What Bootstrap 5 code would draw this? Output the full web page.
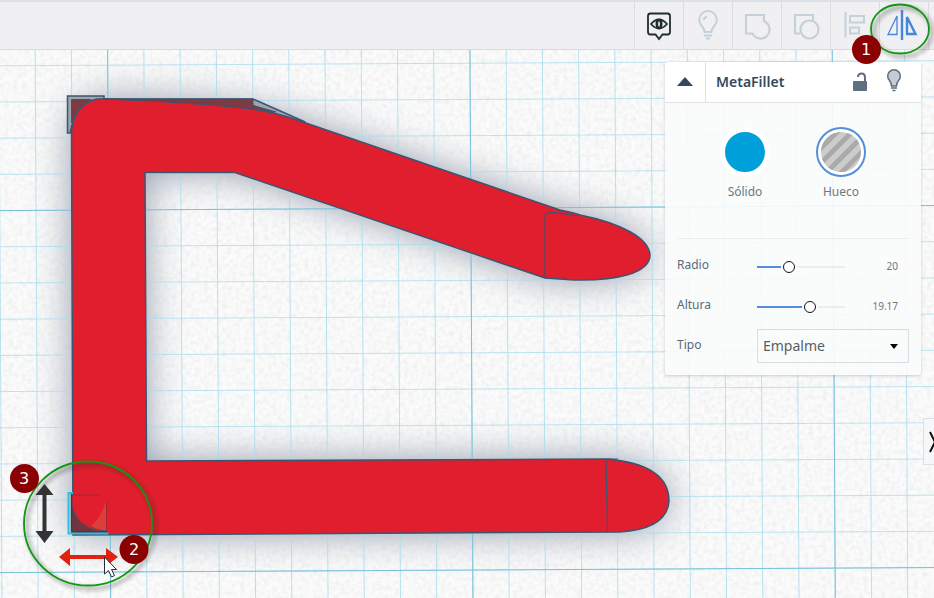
<!DOCTYPE html>
<html lang="es">
<head>
<meta charset="utf-8">
<meta name="viewport" content="width=device-width, initial-scale=1">
<title>MetaFillet</title>
<link href="https://cdn.jsdelivr.net/npm/bootstrap@5.3.0/dist/css/bootstrap.min.css" rel="stylesheet">
<style>
body { font-family: "Noto Sans", "Open Sans", sans-serif; color: #556575; }
.toolbar { height: 50px; background: #f0f0f2; border-top: 2px solid #dbe1e6; border-bottom: 1px solid #d9dade; padding-right: 5px; z-index: 2; }
.tool { width: 49px; border: 0; border-left: 1px solid #dcdde1; background: transparent; color: #c6d0d9; padding: 0; }
.tool:last-child { border-right: 1px solid #dcdde1; width: 50px; }
.tool svg { display: block; }
.scene { min-height: 0; background: #f9fafa; }
.scene-art, .notes { position: absolute; inset: 0; width: 100%; height: 100%; }
.notes { pointer-events: none; z-index: 5; }
.inspector { position: absolute; top: 12px; right: 13px; width: 256px; background: rgba(250, 251, 251, .92); border-radius: 3px; box-shadow: 0 1px 3px rgba(60, 70, 90, .25); }
.inspector-head { height: 41px; background: #fff; border-bottom: 1px solid #dfe1e4; border-radius: 3px 3px 0 0; padding: 0 19px 2px 0; }
.fold { width: 41px; border: 0; border-right: 1px solid #dfe1e4; background: transparent; padding: 0 0 4px; margin-bottom: -2px; }
.plain { border: 0; background: transparent; padding: 0; line-height: 1; }
.title { font-size: 14px; font-weight: 600; color: #34495e; padding-left: 10px; }
.kinds { height: 136px; margin: 0 12px; padding: 24px 43px 0; border-bottom: 1px solid #eaecee; }
.kind { width: 50px; font-size: 12px; line-height: 18px; color: #6b7785; }
.swatch { width: 50px; height: 50px; border-radius: 50%; border: 5px solid #fff; background: #00a0da; margin-bottom: 6px; }
.swatch-hole { border: 2px solid #5290dc; padding: 3px; background: #fff; }
.swatch-hole svg { display: block; }
.params { padding: 6px 12px 10px; font-size: 12px; }
.param { height: 40px; }
.param > label { width: 80px; color: #5a6a7b; }
.track { width: 88px; height: 16px; appearance: none; background: transparent; margin: 4px 0 0; }
.track::-webkit-slider-runnable-track { height: 2px; background: linear-gradient(to right, #5290dc var(--stop), #ececec var(--stop)); }
.track::-webkit-slider-thumb { appearance: none; width: 12px; height: 12px; margin-top: -5px; border-radius: 50%; border: 1px solid #111; background: #fff; box-shadow: 0 0 0 2px #fafbfb; }
.amount { font-size: 10px; padding: 2px 11px 0 0; color: #66758a; }
.choice { width: 152px; height: 34px; border: 1px solid #d8dce3; border-radius: 0; background: transparent; color: #555f66; font-size: 14px; padding: 0 5px 2px; appearance: none; }
.choice-wrap { position: relative; margin-top: 2px; }
.choice-wrap svg { position: absolute; right: 11px; top: 15px; pointer-events: none; }
.drawer { position: absolute; right: 0; top: 368px; width: 11px; height: 47px; border: 1px solid #dcdfe3; border-right: 0; background: #f6f7f8; padding: 0; overflow: hidden; }
.drawer svg { display: block; }
</style>
<script src="https://cdn.jsdelivr.net/npm/bootstrap@5.3.0/dist/js/bootstrap.bundle.min.js"></script>
</head>
<body class="vh-100 overflow-hidden position-relative d-flex flex-column">
<header class="toolbar d-flex justify-content-end flex-shrink-0">
  <button class="tool" aria-label="Vista" style="color:#1f2d2f"><svg width="48" height="47" viewBox="635 2 48 47" fill="none" stroke="currentColor" stroke-width="1.800"><path d="M650.500 13.500h17q2.500 0 2.500 2.500v16q0 2.500-2.500 2.500h-5l-3.500 4.500-3.500-4.500h-5q-2.500 0-2.500-2.500v-16q0-2.500 2.500-2.500z"/><path d="M651 24q8-9 16 0-8 9-16 0z"/><ellipse cx="659" cy="24" rx="2.200" ry="4" stroke-width="2.600"/></svg></button>
  <button class="tool" aria-label="Mostrar todo"><svg width="48" height="47" viewBox="684 2 48 47" fill="none" stroke="currentColor" stroke-width="2"><path d="M704.500 32q0-3-2.800-6a8.800 8.800 0 1 1 12.600 0q-2.800 3-2.800 6zM703.500 20a5 5 0 0 1 3.500-3.500M704 35.500h8M706 38.500h4"/></svg></button>
  <button class="tool" aria-label="Agrupar"><svg width="48" height="47" viewBox="733 2 48 47" fill="none" stroke="currentColor" stroke-width="2.200"><path d="M746 15v18.500h6.500a9 9 0 1 0 11.500-12.300V15z"/></svg></button>
  <button class="tool" aria-label="Desagrupar"><svg width="48" height="47" viewBox="782 2 48 47" fill="none" stroke="currentColor" stroke-width="2.200"><path d="M800 33.500h-5v-18.500h18v5"/><circle cx="809.500" cy="29.500" r="9"/></svg></button>
  <button class="tool" aria-label="Alinear"><svg width="48" height="47" viewBox="831 2 48 47" fill="none" stroke="currentColor" stroke-width="2"><path d="M845.500 12v25.500M850 16h14v6.500h-14zM850 27.500h9v6h-9z"/></svg></button>
  <button class="tool" aria-label="Simetría" style="color:#4586d8"><svg width="48" height="47" viewBox="880 2 48 47" fill="none" stroke="currentColor"><path d="M902 10v30" stroke-width="2.400"/><path d="M897 16v18.500h-9z" stroke-width="1.300"/><path d="M907 17v17h8.500z" stroke-width="2.400"/></svg></button>
</header>
<main class="scene position-relative flex-grow-1 overflow-hidden">
  <svg class="scene-art" viewBox="0 50 934 548" preserveAspectRatio="xMinYMin slice" aria-hidden="true">
    <defs>
      <filter id="grain" x="0" y="0" width="100%" height="100%"><feTurbulence type="fractalNoise" baseFrequency=".22" numOctaves="2" seed="4"/><feColorMatrix values="0 0 0 0 .5  0 0 0 0 .52  0 0 0 0 .53  .4 0 0 0 -.15"/></filter>
      <filter id="soft" x="-20%" y="-20%" width="140%" height="140%" color-interpolation-filters="sRGB"><feGaussianBlur stdDeviation="19"/></filter>
      <pattern id="fine" width="36.230" height="36.200" patternUnits="userSpaceOnUse" patternTransform="matrix(1 -.0054 .0055 1 108 209.500)"><path d="M0 0H36.300M0 0V36.300" stroke="#a8dcec" stroke-width="1.600"/></pattern>
      <pattern id="coarse" width="362.300" height="362" patternUnits="userSpaceOnUse" patternTransform="matrix(1 -.0054 .0055 1 108 209.500)"><path d="M0 0H363M0 0V363" stroke="#7cc0da" stroke-width="2"/></pattern>
      <path id="clamp" d="M71.500 130Q75 104 97 99Q240 99 300 121L560 210Q575 213 580 215C620 223 650 238 650 256C649 273 617 281 574 280L545 278L235 172.500H145L146.500 461L606 459Q669 464 669 501Q667 529 620 532L73 535Z"/>
    </defs>
    <rect y="50" width="934" height="548" fill="#fbfbfb"/>
    <use href="#clamp" fill="#5b6b84" opacity=".68" filter="url(#soft)"/>
    <rect y="50" width="934" height="548" filter="url(#grain)"/>
    <rect y="50" width="934" height="548" fill="url(#fine)"/>
    <rect y="50" width="934" height="548" fill="url(#coarse)"/>
    <path d="M67.500 133V96H104V99H253L304 121.500L300 123L254 106L97 100Q76 104 70 133Z" fill="#9da5ad" stroke="#3c5570" stroke-width="1.500"/>
    <use href="#clamp" fill="#e01e2d" stroke="#3c5570" stroke-width="1.500"/>
    <path d="M71.500 123V99.500H91Q77 107 71.500 123ZM102 99H253V105.500L276 112Q210 103 102 99Z" fill="#7b3b42" stroke="#3c5570"/>
    <path d="M545 278V214Q545 212 560 213L576 216M606 459L607.500 532M606 459h12" fill="none" stroke="#3c5570" stroke-width="1.200"/>
    <path d="M72 495v37h35v-29q-1 11-16 23-14-6-19-20" fill="#7b3b42"/>
    <path d="M72 495h34v37q-28-1-34-26z" fill="#e01e2d"/>
    <path d="M106 500v31q-6 0-15-5 11-9 15-26z" fill="#db3e3b"/>
    <path d="M72 506v26h34q-26-1-34-26z" fill="#70363e"/>
    <path d="M73 495h26M106.500 502v29" fill="none" stroke="#a32532"/>
    <path d="M72 505q4 24 34 26" fill="none" stroke="#3c5570"/>
    <path d="M71.500 494v38h36" fill="none" stroke="#24445c" stroke-width="1.500"/>
    <path d="M73 493h-4.500v40.500h40" fill="none" stroke="#28bfe2" stroke-width="2"/>
  </svg>
  <section class="inspector" aria-label="MetaFillet">
    <div class="inspector-head d-flex align-items-center">
      <button class="fold align-self-stretch" aria-label="Contraer"><svg width="16" height="9"><path d="M0 9L8 0l8 9z" fill="#34495e"/></svg></button>
      <span class="title flex-grow-1">MetaFillet</span>
      <button class="plain me-3" aria-label="Bloquear"><svg width="18" height="24" fill="none" stroke="#5e6f81"><path d="M1.500 12.500h13v9h-13z" fill="#5e6f81" stroke-width="1"/><path d="M6 8V7.500q.5-3 3.500-3 3.500 0 3.500 4v4" stroke-width="2"/></svg></button>
      <button class="plain" aria-label="Visibilidad"><svg width="16" height="24" fill="#c6ccd3" stroke="#5e6f81" stroke-width="1.500"><path d="M5.500 17q0-3-2-5.500a6.300 6.300 0 1 1 9 0q-2 2.500-2 5.500zM5 19h6M6.500 21.500h3"/></svg></button>
    </div>
    <div class="kinds d-flex justify-content-between align-items-start text-center">
      <button class="plain kind" type="button"><span class="swatch d-block"></span>Sólido</button>
      <button class="plain kind" type="button"><span class="swatch swatch-hole d-block"><svg width="40" height="40" viewBox="0 0 40 40"><defs><clipPath id="disc"><circle cx="20" cy="20" r="20"/></clipPath></defs><g clip-path="url(#disc)"><path d="M0 0h40v40H0z" fill="#ccc"/><path d="M-8 24L24-8M-8 39L39-8M-3 49L49-3M8 53L53 8" stroke="#aaa" stroke-width="5"/></g></svg></span>Hueco</button>
    </div>
    <div class="params">
      <div class="param d-flex align-items-center"><label for="radio">Radio</label><input class="track" id="radio" type="range" min="0" max="100" value="34" style="--stop:28%"><output class="amount ms-auto" for="radio">20</output></div>
      <div class="param d-flex align-items-center"><label for="altura">Altura</label><input class="track" id="altura" type="range" min="0" max="100" value="62" style="--stop:52%"><output class="amount ms-auto" for="altura">19.17</output></div>
      <div class="param d-flex align-items-center"><label for="tipo">Tipo</label><div class="choice-wrap"><select class="choice" id="tipo"><option>Empalme</option></select><svg width="8" height="5"><path d="M0 0h8L4 5z"/></svg></div></div>
    </div>
  </section>
  <button class="drawer" aria-label="Abrir panel"><svg width="11" height="45" fill="none" stroke="#111" stroke-width="2"><path d="M6 13l5 10-5 10"/></svg></button>
</main>
<svg class="notes" viewBox="0 0 934 598" preserveAspectRatio="xMinYMin slice">
  <defs><filter id="drop" x="-20%" y="-20%" width="150%" height="150%"><feDropShadow dx="3" dy="3" stdDeviation="2" flood-color="#222" flood-opacity=".65"/></filter></defs>
  <g fill="none" stroke="#129612" stroke-width="1.800" filter="url(#drop)"><ellipse cx="900" cy="29" rx="29" ry="24.500"/><ellipse cx="88" cy="523.500" rx="64" ry="62"/></g>
  <path d="M44.500 484l9 11h-7v36h7l-9 12-9-12h7v-36h-7z" fill="#333"/>
  <path d="M59 557l11-9v7h36v-7l12 9-12 9v-7H70v7z" fill="#e0220f"/>
  <path d="M104.500 557v17l4-3.500 3 6.500 3-1.500-3-6h5z" fill="#fff" stroke="#222c40"/>
  <g fill="#8b0000"><circle cx="866.500" cy="49.500" r="14.500"/><circle cx="134" cy="549.500" r="14.500"/><circle cx="24.500" cy="478.500" r="14.500"/></g>
  <g fill="#fff" font-family="DejaVu Sans, sans-serif" font-size="16" text-anchor="middle"><text x="866" y="55">1</text><text x="134" y="555">2</text><text x="24" y="484">3</text></g>
</svg>
</body>
</html>
